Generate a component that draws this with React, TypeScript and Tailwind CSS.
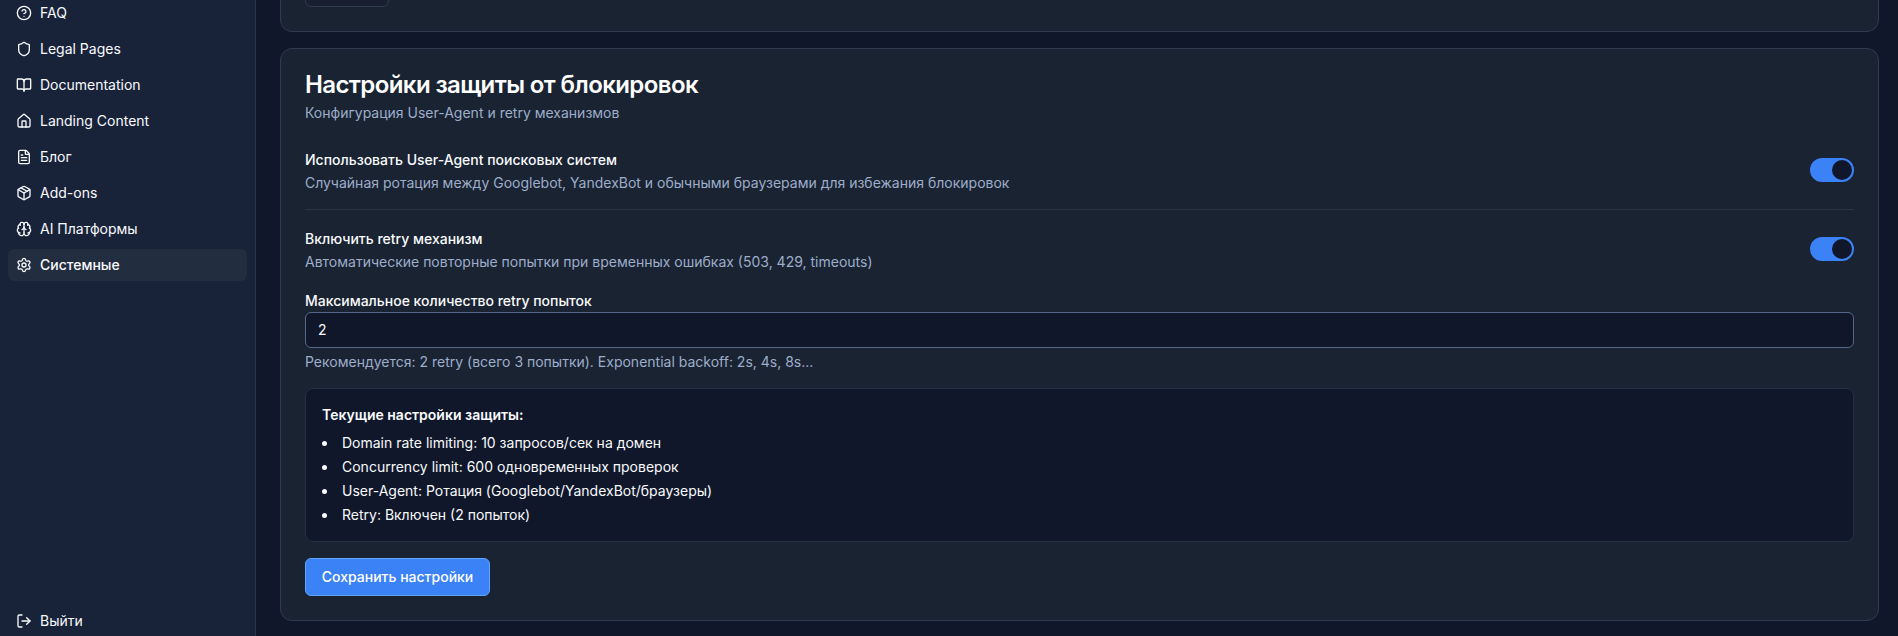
import { BookOpen, Brain, CircleHelp, FileText, House, LogOut, Package, Settings, Shield } from "lucide-react";

const navItems = [
  { label: "FAQ", icon: CircleHelp },
  { label: "Legal Pages", icon: Shield },
  { label: "Documentation", icon: BookOpen },
  { label: "Landing Content", icon: House },
  { label: "Блог", icon: FileText },
  { label: "Add-ons", icon: Package },
  { label: "AI Платформы", icon: Brain },
  { label: "Системные", icon: Settings, active: true },
];

const currentSettings = [
  "Domain rate limiting: 10 запросов/сек на домен",
  "Concurrency limit: 600 одновременных проверок",
  "User-Agent: Ротация (Googlebot/YandexBot/браузеры)",
  "Retry: Включен (2 попыток)",
];

function Toggle() {
  return (
    <div className="flex h-6 w-11 shrink-0 items-center justify-end rounded-full border-2 border-[#3b82f6] bg-[#3b82f6]">
      <span className="h-5 w-5 rounded-full bg-[#10172a]" />
    </div>
  );
}

function SettingRow({ title, text }: { title: string; text: string }) {
  return (
    <div className="flex items-center justify-between">
      <div className="flex flex-col gap-[3px] pt-[3px]">
        <div className="text-sm leading-5 font-medium text-[#f8fafc]">{title}</div>
        <div className="text-sm leading-5 text-[#9dadca]">{text}</div>
      </div>
      <Toggle />
    </div>
  );
}

export default function App() {
  return (
    <div className="flex h-[636px] w-full overflow-hidden bg-[#10172a] font-['Inter',sans-serif] text-[#f8fafc]">
      {/*Sidebar*/}
      <aside className="flex h-full w-64 shrink-0 flex-col justify-between overflow-hidden border-r border-[#2a3549] bg-[#18233a] px-2">
        <nav className="-mt-[3px] flex flex-col gap-1">
          {navItems.map((item) => (
            <div
              key={item.label}
              className={`flex h-8 items-center gap-2 rounded-md px-2 text-sm ${
                item.active ? "bg-[#232d40] font-medium" : ""
              }`}
            >
              <item.icon className="h-4 w-4" strokeWidth={2} />
              <span>{item.label}</span>
            </div>
          ))}
        </nav>
        <div className="flex h-[30px] items-center gap-2 px-2 text-sm">
          <LogOut className="h-4 w-4" />
          <span>Выйти</span>
        </div>
      </aside>

      {/*Main*/}
      <main className="flex-1 overflow-hidden pr-[19px] pl-6">
        <div className="-mt-[68px] flex flex-col gap-4">
          <div className="flex h-[100px] flex-col justify-end rounded-xl border border-[#2f3b4e] bg-[#1a2332] p-6">
            <div className="h-10 w-[84px] rounded-md border border-[#2f3b4e] bg-[#182030]" />
          </div>

          <section className="rounded-xl border border-[#2f3b4e] bg-[#1a2332]">
            <div className="flex flex-col gap-1.5 p-6">
              <h2 className="text-2xl leading-none font-semibold tracking-tight text-white">
                Настройки защиты от блокировок
              </h2>
              <p className="text-sm leading-5 text-[#9dadca]">Конфигурация User-Agent и retry механизмов</p>
            </div>

            <div className="px-6 pb-6">
              <SettingRow
                title="Использовать User-Agent поисковых систем"
                text="Случайная ротация между Googlebot, YandexBot и обычными браузерами для избежания блокировок"
              />
              <div className="my-4 h-px bg-[#2a3445]" />
              <SettingRow
                title="Включить retry механизм"
                text="Автоматические повторные попытки при временных ошибках (503, 429, timeouts)"
              />

              <label className="mt-[19px] block text-sm leading-5 font-medium">
                Максимальное количество retry попыток
              </label>
              <div className="mt-px flex h-9 items-center rounded-md border border-[#56688a] bg-[#10172a] px-3 text-sm">
                2
              </div>
              <p className="mt-1 text-sm leading-5 text-[#9dadca]">
                Рекомендуется: 2 retry (всего 3 попытки). Exponential backoff: 2s, 4s, 8s...
              </p>

              <div className="mt-4 rounded-lg border border-[#243043] bg-[#10172a] p-4">
                <h4 className="text-sm leading-5 font-semibold">Текущие настройки защиты:</h4>
                <ul className="mt-2 space-y-1 text-sm leading-5">
                  {currentSettings.map((line) => (
                    <li key={line} className="flex items-center gap-[15px]">
                      <span className="h-[5px] w-[5px] shrink-0 rounded-full bg-[#f8fafc]" />
                      {line}
                    </li>
                  ))}
                </ul>
              </div>

              <button className="mt-4 h-[38px] w-[185px] rounded-md border border-[#60a5fa] bg-[#3b82f6] text-sm font-medium text-white">
                Сохранить настройки
              </button>
            </div>
          </section>
        </div>
      </main>
    </div>
  );
}
